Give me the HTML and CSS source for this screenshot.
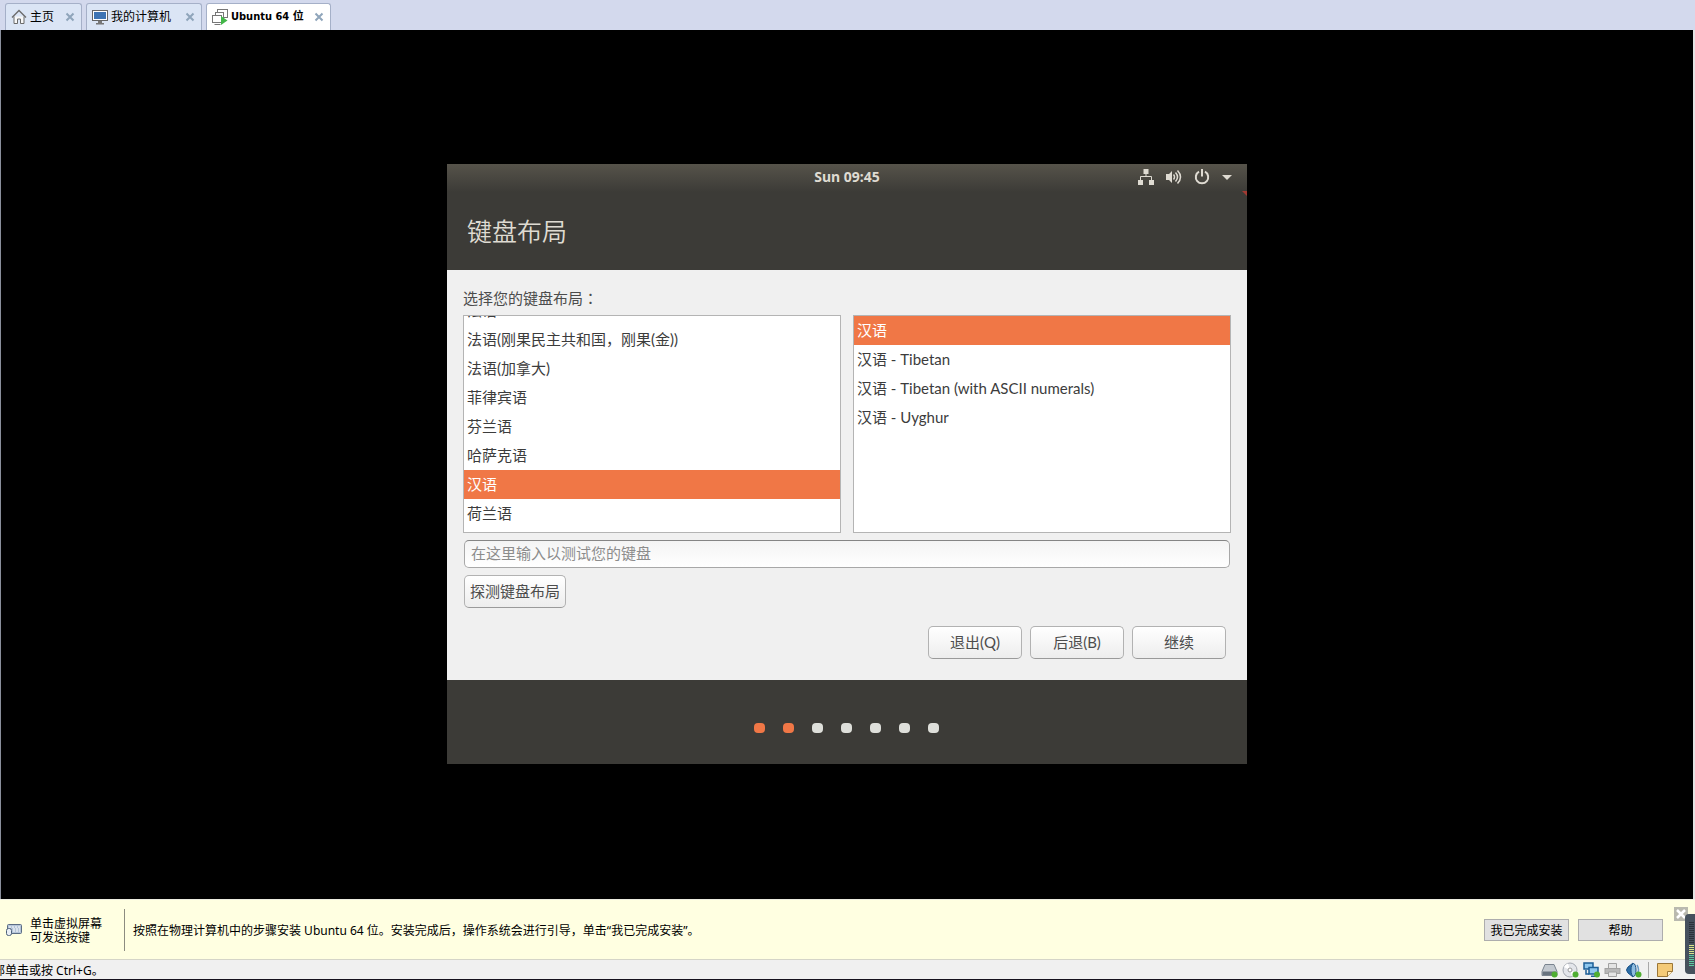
FILE: index.html
```html
<!DOCTYPE html>
<html lang="zh-CN">
<head>
<meta charset="utf-8">
<title>Ubuntu 64 位</title>
<link rel="stylesheet" href="styles.css">
</head>
<body>
<nav class="tabs">
  <div class="tab">
    <svg class="tab-icon" width="16" height="16" viewBox="0 0 16 16" fill="none" stroke="#6b6b6b"><path d="M3 7.500v7h3.500V10h3v4.500H13v-7" fill="#f8f8f8"/><path d="M1 8.500 8 1.500l7 7" stroke-width="1.400"/></svg>
    <span>主页</span>
    <button class="tab-close" aria-label="关闭 主页"><svg width="10" height="10" viewBox="0 0 10 10"><path d="M1.500 1.500l7 7M8.500 1.500l-7 7"/></svg></button>
  </div>
  <div class="tab tab-library">
    <svg class="tab-icon" width="16" height="16" viewBox="0 0 16 16"><rect x=".5" y="1.500" width="15" height="10" fill="#fff" stroke="#666"/><rect x="2" y="3" width="12" height="7" fill="#3d74b4"/><path d="M6 12h4v2h2v1.500H4V14h2z" fill="#777"/></svg>
    <span>我的计算机</span>
    <button class="tab-close" aria-label="关闭 我的计算机"><svg width="10" height="10" viewBox="0 0 10 10"><path d="M1.500 1.500l7 7M8.500 1.500l-7 7"/></svg></button>
  </div>
  <div class="tab tab-active">
    <svg class="tab-icon" width="16" height="16" viewBox="0 0 16 16"><g fill="#fff" stroke="#777"><rect x="5.500" y=".5" width="10" height="8"/><rect x="3.500" y="3.500" width="8" height="7"/><rect x=".5" y="6.500" width="9" height="7"/><path d="M2.500 15.500h6"/></g><path d="M9 7l6.500 4.500L9 16z" fill="#43b649"/></svg>
    <span>Ubuntu 64 位</span>
    <button class="tab-close" aria-label="关闭 Ubuntu 64 位"><svg width="10" height="10" viewBox="0 0 10 10"><path d="M1.500 1.500l7 7M8.500 1.500l-7 7"/></svg></button>
  </div>
</nav>

<main class="screen">
  <section class="installer">
    <header class="top">
      <div class="panel">
        <span class="clock">Sun 09:45</span>
        <div class="indicators">
          <svg width="16" height="16" viewBox="0 0 16 16" fill="#dfdbd2"><path d="M5.500 0h5v5h-5zM0 11h5v5H0zM11 11h5v5h-5z"/><path d="M8 5v3M2.500 11V7.500h11V11" fill="none" stroke="#dfdbd2"/></svg>
          <svg width="16" height="16" viewBox="0 0 16 16" fill="none" stroke="#dfdbd2" stroke-width="1.500"><path d="M0 5h3l3-3v12l-3-3H0z" fill="#dfdbd2" stroke="none"/><path d="M7.500 5.500q2 2.500 0 5M9.500 3.500q4 4.500 0 9M11.500 1.500q6 6.500 0 13"/></svg>
          <svg width="16" height="16" viewBox="0 0 16 16" fill="none" stroke="#dfdbd2" stroke-width="2"><path d="M5 2.700a6.200 6.200 0 1 0 6 0M8 0v7.500"/></svg>
          <svg width="10" height="16" viewBox="0 0 10 16" fill="#dfdbd2"><path d="M0 6h10l-5 5z"/></svg>
        </div>
      </div>
      <h1 class="title">键盘布局</h1>
      <svg class="corner" width="5" height="5" viewBox="0 0 5 5"><path d="M0 0h5v5z" fill="#a33a32"/></svg>
    </header>

    <div class="body">
      <p class="prompt" id="prompt">选择您的键盘布局<span lang="zh-TW" class="colon">：</span></p>
      <div class="lists">
        <ul class="list list-scrolled" role="listbox" aria-labelledby="prompt">
          <li role="option">法语</li>
          <li role="option">法语(刚果民主共和国，刚果(金))</li>
          <li role="option">法语(加拿大)</li>
          <li role="option">菲律宾语</li>
          <li role="option">芬兰语</li>
          <li role="option">哈萨克语</li>
          <li role="option" class="selected" aria-selected="true">汉语</li>
          <li role="option">荷兰语</li>
        </ul>
        <ul class="list" role="listbox" aria-labelledby="prompt">
          <li role="option" class="selected" aria-selected="true">汉语</li>
          <li role="option">汉语 - Tibetan</li>
          <li role="option">汉语 - Tibetan (with ASCII numerals)</li>
          <li role="option">汉语 - Uyghur</li>
        </ul>
      </div>
      <input class="test" type="text" placeholder="在这里输入以测试您的键盘" aria-label="在这里输入以测试您的键盘">
      <button class="btn detect">探测键盘布局</button>
      <div class="actions">
        <button class="btn">退出(Q)</button>
        <button class="btn">后退(B)</button>
        <button class="btn">继续</button>
      </div>
    </div>

    <footer class="dots">
      <i class="dot dot-on"></i><i class="dot dot-on"></i><i class="dot"></i><i class="dot"></i><i class="dot"></i><i class="dot"></i><i class="dot"></i>
    </footer>
  </section>
</main>

<aside class="hint">
  <svg width="16" height="14" viewBox="0 0 16 14"><rect x="1.500" y="1.500" width="14" height="9" rx="1" fill="#b4c4d8" stroke="#5c6d84"/><path d="M3 4h11M7 6h7M7 8h7" stroke="#fff" stroke-dasharray="2 1"/><rect x=".5" y="5.500" width="5" height="7" rx="2" fill="#e8eef5" stroke="#4d6079"/></svg>
  <p class="hint-keys">单击虚拟屏幕<br>可发送按键</p>
  <p class="hint-text">按照在物理计算机中的步骤安装 Ubuntu 64 位。安装完成后，操作系统会进行引导，单击“我已完成安装”。</p>
  <div class="hint-actions">
    <button class="win-btn">我已完成安装</button>
    <button class="win-btn">帮助</button>
  </div>
  <button class="hint-close" aria-label="关闭"><svg width="14" height="14" viewBox="0 0 14 14"><path d="M3 3l8 8M11 3l-8 8" stroke="#fff" stroke-width="2.500"/></svg></button>
  <svg class="meter" width="10" height="60" viewBox="0 0 10 60"><path d="M10 0H4Q0 0 0 4v52q0 4 4 4h6z" fill="#46515d"/><path d="M6.500 8v22" stroke="#2b323a" stroke-width="5" stroke-dasharray="1 1"/><path d="M6.500 31v10" stroke="#d8e48a" stroke-width="5" stroke-dasharray="1 1"/><path d="M6.500 41v12" stroke="#5fc9a0" stroke-width="5" stroke-dasharray="1 1"/></svg>
</aside>

<footer class="status">
  <p class="status-text">部单击或按 Ctrl+G。</p>
  <div class="devices">
    <svg width="17" height="16" viewBox="0 0 17 16"><path d="M4 2.500h9l3 7v4H1v-4z" fill="#c3c9d0" stroke="#7a848f"/><path d="M1.500 9.500h14v3.500h-14z" fill="#68737f"/><circle cx="13.500" cy="12.500" r="3" fill="#4fae32"/></svg>
    <svg width="17" height="16" viewBox="0 0 17 16"><circle cx="8" cy="8" r="7" fill="#e3e5ea" stroke="#a4a8b0"/><path d="M8 8 2 5a7 7 0 0 1 4-3.500zM8 8l6 3a7 7 0 0 1-4 3.500z" fill="#fff"/><circle cx="8" cy="8" r="2" fill="#fff" stroke="#999"/><circle cx="13.500" cy="12.500" r="3" fill="#4fae32"/></svg>
    <svg width="17" height="16" viewBox="0 0 17 16"><g fill="#8fc7ee" stroke="#1d5e96" stroke-width="1.500"><path d="M3 8v4h3M8 14.200h6" fill="none"/><rect x="1" y="1" width="9" height="6"/><rect x="6" y="5.500" width="9" height="6.500"/></g><circle cx="14" cy="12.500" r="3" fill="#4fae32"/></svg>
    <svg width="17" height="16" viewBox="0 0 17 16" fill="#e4e4e4" stroke="#a2a2a2"><path d="M4.500 1.500h8v5h-8z"/><rect x="1" y="6.500" width="15" height="5" fill="#b8b8b8"/><path d="M4.500 10h8v4.500h-8z"/></svg>
    <svg width="17" height="16" viewBox="0 0 17 16"><path d="M3 5l5-4q2 7 0 14l-5-4q-3-3 0-6z" fill="#2c6ea8" stroke="#1c5285"/><ellipse cx="8.500" cy="8" rx="2.500" ry="6.500" fill="#8fbde0" stroke="#1c5285"/><path d="M12 3q3 5 0 9" fill="none" stroke="#6b9cc5" stroke-width="1.500"/><circle cx="13.500" cy="12.500" r="3" fill="#4fae32"/></svg>
    <span class="rule"></span>
    <svg width="16" height="16" viewBox="0 0 16 16"><path d="M.5 1.500h15v8l-5 5H.5z" fill="#f4ca78" stroke="#9b7638"/><path d="M10.500 14.500v-5h5" fill="#fff0c8" stroke="#9b7638"/></svg>
  </div>
</footer>
</body>
</html>
```
FILE: styles.css
```css
* { box-sizing: border-box; }

body {
  margin: 0;
  min-height: 100vh;
  display: flex;
  flex-direction: column;
  font: 12px/14px "Noto Sans", "Noto Sans CJK SC", sans-serif;
  color: #000;
  background: #f0f0f0;
}

p, h1, ul { margin: 0; padding: 0; }
svg { flex: none; display: block; }
button, input { font: inherit; color: inherit; }

/* Tab strip */
.tabs {
  display: flex;
  gap: 4px;
  height: 30px;
  padding: 3px 5px 0;
  background: #d3d9ed;
}
.tab {
  display: flex;
  align-items: center;
  gap: 3px;
  min-width: 77px;
  padding: 0 6px 0 5px;
  border: 1px solid #a5b0c8;
  border-bottom: 0;
  border-radius: 3px 3px 0 0;
  background: #dbe5f5;
  white-space: nowrap;
}
.tab-library { min-width: 116px; }
.tab-active {
  min-width: 125px;
  background: #fff;
  font-family: "DejaVu Sans Condensed", "DejaVu Sans", "Noto Sans CJK SC", sans-serif;
  font-size: 11px;
  font-weight: 700;
}
.tab-close {
  margin-left: auto;
  padding: 0;
  border: 0;
  background: none;
}
.tab-close path { stroke: #8fa5bb; stroke-width: 2; }

/* Virtual machine display */
.screen {
  flex: 1;
  display: flex;
  align-items: center;
  justify-content: center;
  padding-bottom: 2px;
  background: #000;
  border: solid #8a8f9c;
  border-width: 0 2px 0 1px;
  border-right-color: #e4e4e4;
}
.installer {
  width: 800px;
  max-width: 100%;
  font-family: Lato, "Noto Sans CJK SC", sans-serif;
  font-size: 15px;
  line-height: 29px;
  color: #3c3c3c;
}
.top {
  position: relative;
  height: 106px;
  background: linear-gradient(#56534a, #3c3b37 28px);
  color: #dfdbd2;
}
.panel {
  display: grid;
  grid-template-columns: 1fr auto 1fr;
  align-items: center;
  height: 26px;
  padding: 0 15px;
}
.clock {
  grid-column: 2;
  font: 700 14px/26px "Noto Sans", sans-serif;
}
.indicators {
  display: flex;
  justify-content: flex-end;
  gap: 12px;
}
.title {
  padding: 22px 20px;
  font-size: 25px;
  line-height: 38px;
  font-weight: 350;
}
.corner { position: absolute; right: 0; top: 27px; }

.body {
  display: flex;
  flex-direction: column;
  padding: 13px 16px 21px;
  background: #f0f0f0;
}
.prompt { padding-bottom: 2px; color: #4c4c4c; }
.colon { font-family: "Noto Sans CJK TC", sans-serif; }
.lists {
  display: grid;
  grid-template-columns: 1fr 1fr;
  gap: 12px;
}
.list {
  height: 218px;
  border: 1px solid #b4b4b4;
  background: #fff;
  overflow: hidden;
  list-style: none;
}
.list-scrolled {
  display: flex;
  flex-direction: column;
  justify-content: flex-end;
  padding-bottom: 4px;
}
.list li {
  flex: none;
  height: 29px;
  padding: 0 3px;
  white-space: nowrap;
}
.list .selected { background: #f07746; color: #fff; }

.test {
  height: 28px;
  margin: 7px 1px;
  padding: 0 6px;
  border: 1px solid #a8a8a8;
  border-top-color: #858585;
  border-radius: 5px;
  background: linear-gradient(#f4f4f4, #fff);
}
.test::placeholder { color: #8c8c8c; opacity: 1; }

.btn {
  height: 33px;
  width: 94px;
  padding: 0;
  border: 1px solid #b2b2b2;
  border-bottom-color: #9a9a9a;
  border-radius: 5px;
  background: linear-gradient(#fff, #ededed);
  color: #4c4c4c;
}
.detect { width: 102px; margin-left: 1px; }
.actions {
  display: flex;
  justify-content: flex-end;
  gap: 8px;
  padding: 18px 5px 0;
}

.dots {
  display: flex;
  align-items: center;
  justify-content: center;
  gap: 18px;
  height: 84px;
  padding: 12px 1px 0 0;
  background: #3c3b37;
}
.dot {
  width: 11px;
  height: 10px;
  border-radius: 4px;
  background: #dedfda;
}
.dot-on { background: #f07746; }

/* Install hint bar */
.hint {
  position: relative;
  display: flex;
  align-items: center;
  gap: 8px;
  height: 61px;
  padding: 1px 32px 0 6px;
  border-top: 1px solid #ecece0;
  border-bottom: 1px solid #d5d5c8;
  background: #ffffe1;
}
.hint-keys { width: 86px; padding-top: 2px; }
.hint-text {
  flex: 1;
  padding: 15px 8px 13px;
  border-left: 1px solid #8c8c80;
}
.hint-actions { display: flex; gap: 9px; }
.win-btn {
  width: 85px;
  height: 22px;
  padding: 1px 0 0;
  border: 1px solid #adadad;
  background: #e1e1e1;
}
.hint-close {
  position: absolute;
  right: 7px;
  top: 7px;
  padding: 0;
  border: 0;
  background: #b9b9ae;
}
.meter { position: absolute; right: 0; top: 14px; z-index: 1; }

/* Status bar */
.status {
  display: flex;
  align-items: center;
  justify-content: space-between;
  height: 20px;
  padding-right: 22px;
  border-bottom: 1px solid #14101c;
  background: #f0f0f0;
  overflow: hidden;
}
.status-text { padding-top: 2px; text-indent: -7px; }
.devices { display: flex; align-items: center; gap: 4px; }
.rule { width: 1px; height: 16px; margin: 0 4px 0 2px; background: #a9a9a9; }
```
